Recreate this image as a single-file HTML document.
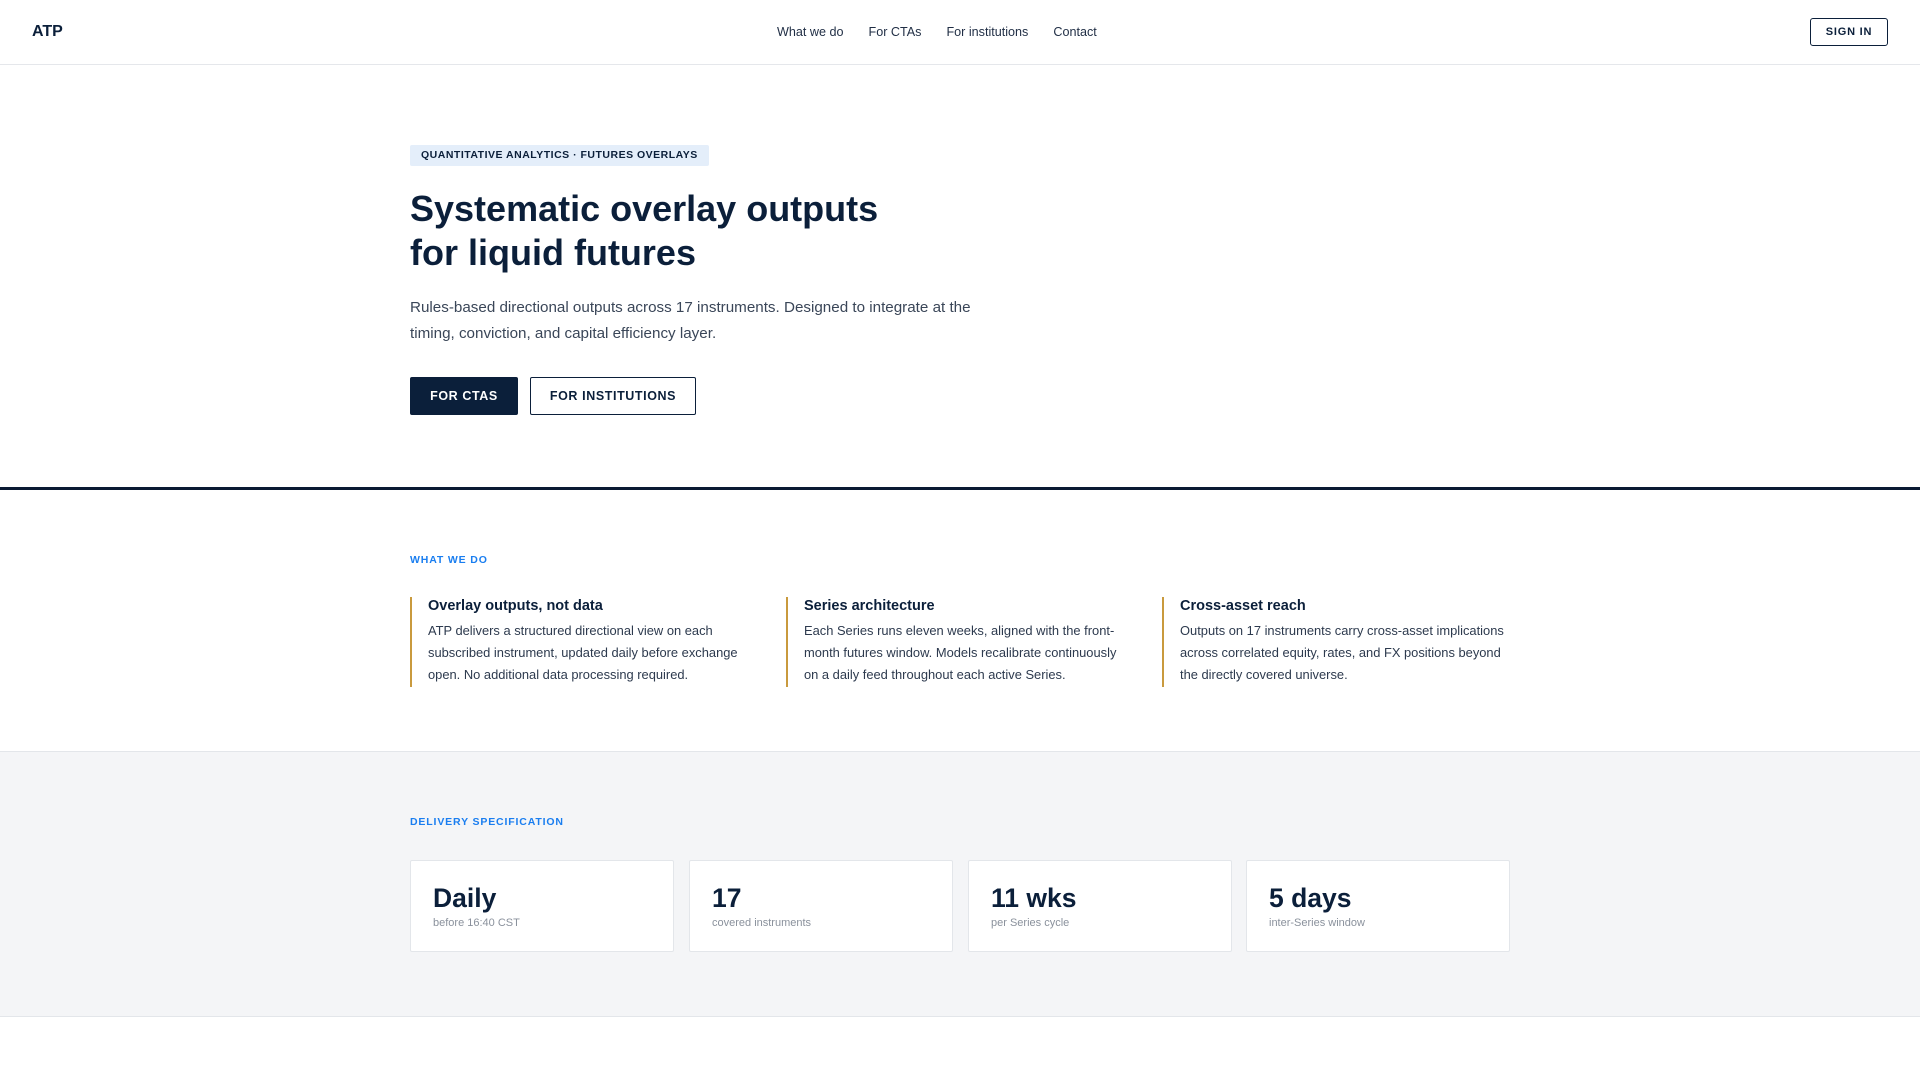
<!DOCTYPE html>
<html><head><meta charset="utf-8"><style>
*{box-sizing:border-box;margin:0;padding:0}
body{width:1920px;height:1080px;overflow:hidden;background:#fff;font-family:"Liberation Sans",Arial,sans-serif;color:#0b1f3a}
.nav{height:65px;border-bottom:1px solid #e5e7eb;position:relative}
.logo{position:absolute;left:32px;top:23px;font-weight:700;font-size:16px;color:#0b1f3a}
.links{position:absolute;left:777px;top:25px;font-size:12.6px;color:#1f2d44}
.links span{margin-right:25px}
.signin{position:absolute;left:1810px;top:18px;width:78px;height:28px;border:1.5px solid #0b1f3a;border-radius:3px;font-size:11px;font-weight:700;letter-spacing:.8px;text-align:center;line-height:27px}
.badge{position:absolute;left:410px;top:145px;height:21px;padding:0 11px;background:#e4eefa;border-radius:2px;font-size:10.5px;font-weight:700;letter-spacing:.5px;line-height:21px;color:#0b1f3a}
h1{position:absolute;left:410px;top:187px;font-size:36px;line-height:44px;font-weight:700;color:#0b1f3a}
.lead{position:absolute;left:410px;top:295px;width:570px;font-size:15.2px;line-height:26px;color:#3a4658}
.btn{position:absolute;top:377px;height:38px;font-size:12.5px;font-weight:700;letter-spacing:.6px;text-align:center;line-height:36px;border-radius:2px}
.b1{left:410px;width:108px;background:#0b1f3a;color:#fff;border:1px solid #0b1f3a}
.b2{left:530px;width:166px;border:1.5px solid #0b1f3a;color:#0b1f3a}
.rule{position:absolute;left:0;top:487px;width:1920px;height:3px;background:#0b1a33}
.label{position:absolute;left:410px;font-size:10.5px;font-weight:700;letter-spacing:.85px;color:#1a7ef0}
.col{position:absolute;top:597px;width:345px;height:90px;border-left:2px solid #c99a3e;padding-left:16px}
.col h3{font-size:14.5px;font-weight:700;color:#0b1f3a;margin-top:1px;line-height:16px}
.col p{font-size:12.9px;line-height:22px;color:#2d3a4e;margin-top:6px}
.gray{position:absolute;left:0;top:751px;width:1920px;height:266px;background:#f4f5f7;border-top:1px solid #e3e6ea;border-bottom:1px solid #e3e6ea}
.card{position:absolute;top:860px;width:264px;height:92px;background:#fff;border:1px solid #e3e6ea;border-radius:2px;padding-left:22px}
.card b{display:block;font-size:26.5px;margin-top:22px;line-height:30px;color:#0b1f3a}
.card span{display:block;font-size:11px;color:#8a919c;margin-top:4px}
</style></head><body>
<div class="nav"><div class="logo">ATP</div>
<div class="links"><span>What we do</span><span>For CTAs</span><span>For institutions</span><span>Contact</span></div>
<div class="signin">SIGN IN</div></div>
<div class="badge">QUANTITATIVE ANALYTICS · FUTURES OVERLAYS</div>
<h1>Systematic overlay outputs<br>for liquid futures</h1>
<div class="lead">Rules-based directional outputs across 17 instruments. Designed to integrate at the timing, conviction, and capital efficiency layer.</div>
<div class="btn b1">FOR CTAS</div><div class="btn b2">FOR INSTITUTIONS</div>
<div class="rule"></div>
<div class="label" style="top:554px">WHAT WE DO</div>
<div class="col" style="left:410px"><h3>Overlay outputs, not data</h3><p>ATP delivers a structured directional view on each subscribed instrument, updated daily before exchange open. No additional data processing required.</p></div>
<div class="col" style="left:786px"><h3>Series architecture</h3><p>Each Series runs eleven weeks, aligned with the front-month futures window. Models recalibrate continuously on a daily feed throughout each active Series.</p></div>
<div class="col" style="left:1162px"><h3>Cross-asset reach</h3><p>Outputs on 17 instruments carry cross-asset implications across correlated equity, rates, and FX positions beyond the directly covered universe.</p></div>
<div class="gray"></div>
<div class="label" style="top:816px">DELIVERY SPECIFICATION</div>
<div class="card" style="left:410px"><b>Daily</b><span>before 16:40 CST</span></div>
<div class="card" style="left:689px"><b>17</b><span>covered instruments</span></div>
<div class="card" style="left:968px"><b>11 wks</b><span>per Series cycle</span></div>
<div class="card" style="left:1246px"><b>5 days</b><span>inter-Series window</span></div>
</body></html>
